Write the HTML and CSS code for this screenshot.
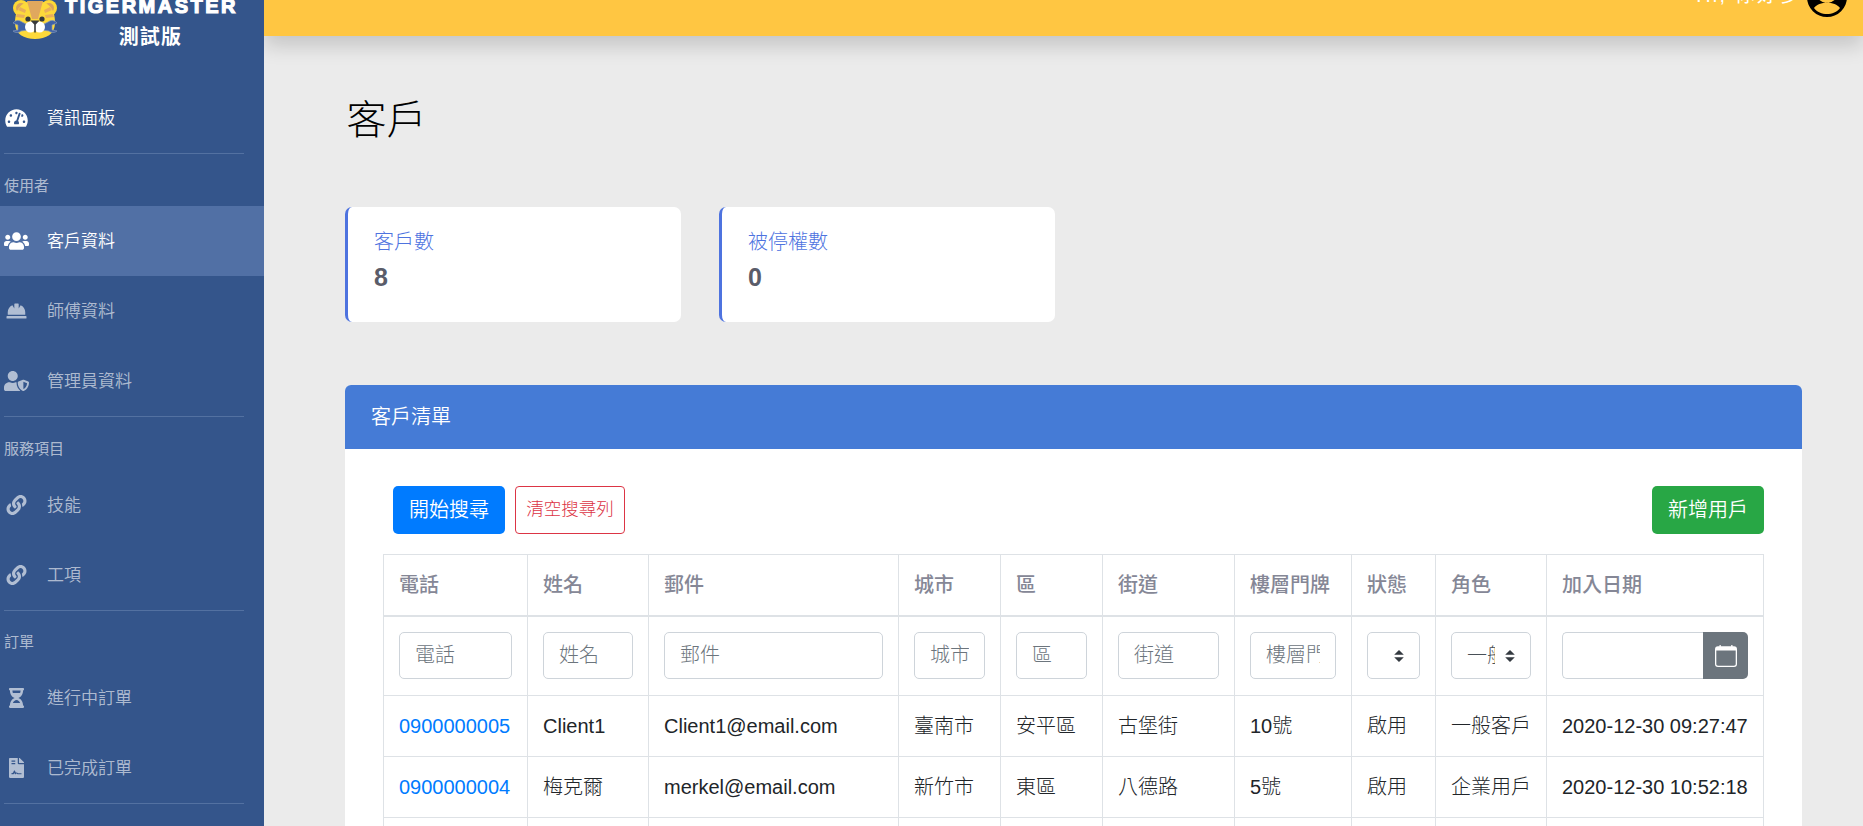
FILE: index.html
```html
<!DOCTYPE html>
<html lang="zh-Hant">
<head>
<meta charset="utf-8">
<title>客戶</title>
<link rel="stylesheet" href="styles.css">
</head>
<body>
<div class="app">
  <aside class="sidebar">
    <a class="brand">
      <svg class="brand-logo" viewBox="0 0 46 42">
        <circle cx="9" cy="9" r="8" fill="#fdd835"/><circle cx="37" cy="9" r="8" fill="#fdd835"/>
        <circle cx="9" cy="9" r="5" fill="#d9a35c"/><circle cx="37" cy="9" r="5" fill="#d9a35c"/>
        <path d="M3 24C3 8 11 2 23 2s20 6 20 22c0 11-9 16-20 16S3 35 3 24z" fill="#fdd93b"/>
        <path d="M15 2h16l-5 18h-6z" fill="#e0a85e"/>
        <path d="M5 15l8 1-1 3-8-1zM41 15l-8 1 1 3 8-1zM8 8l6 3-1 3-7-3zM38 8l-6 3 1 3 7-3z" fill="#e8ae5c"/>
        <circle cx="16" cy="20" r="2.600" fill="#373a3c"/><circle cx="30" cy="20" r="2.600" fill="#373a3c"/>
        <path d="M1 24a6 6 0 0 1 9-1l6 3v5l-7 1a6 6 0 0 1-8 0l5-1v-5zM45 24a6 6 0 0 0-9-1l-6 3v5l7 1a6 6 0 0 0 8 0l-5-1v-5z" fill="#3f62a8" stroke="#8296b8" stroke-width=".7"/>
        <circle cx="18.500" cy="28" r="5.500" fill="#fff"/><circle cx="27.500" cy="28" r="5.500" fill="#fff"/>
        <path d="M18.500 21.500h9l-3.700 4v8h-1.600v-8z" fill="#373a3c"/>
      </svg>
      <span class="brand-text">TIGERMASTER<br><span class="brand-sub">測試版</span></span>
    </a>
    <nav class="nav">
      <a class="item bright"><svg viewBox="0 0 576 512"><path d="M288 32C128.940 32 0 160.940 0 320c0 52.800 14.250 102.260 39.060 144.800 5.610 9.620 16.300 15.200 27.440 15.200h443c11.140 0 21.830-5.580 27.440-15.200C561.750 422.260 576 372.800 576 320c0-159.060-128.940-288-288-288zm0 64c14.710 0 26.580 10.130 30.320 23.650-1.110 2.260-2.640 4.230-3.450 6.670l-9.220 27.670c-5.130 3.490-10.970 6.010-17.640 6.010-17.670 0-32-14.330-32-32S270.330 96 288 96zM96 384c-17.670 0-32-14.330-32-32s14.330-32 32-32 32 14.330 32 32-14.330 32-32 32zm48-160c-17.670 0-32-14.330-32-32s14.330-32 32-32 32 14.330 32 32-14.330 32-32 32zm246.770-72.410l-61.330 184C343.130 347.330 352 364.540 352 384c0 11.720-3.380 22.550-8.880 32H232.880c-5.500-9.450-8.880-20.280-8.880-32 0-33.940 26.500-61.430 59.900-63.590l61.340-184.010c4.170-12.560 17.730-19.450 30.360-15.170 12.570 4.190 19.350 17.790 15.170 30.360zm14.660 57.200l15.520-46.550c3.470-1.290 7.130-2.230 11.050-2.230 17.670 0 32 14.330 32 32s-14.330 32-32 32c-11.380-.01-20.890-6.280-26.570-15.220zM480 384c-17.670 0-32-14.330-32-32s14.330-32 32-32 32 14.330 32 32-14.330 32-32 32z"/></svg><span>資訊面板</span></a>
      <hr>
      <div class="heading">使用者</div>
      <a class="item active"><svg viewBox="0 0 640 512"><path d="M96 224c35.300 0 64-28.700 64-64s-28.700-64-64-64-64 28.700-64 64 28.700 64 64 64zm448 0c35.300 0 64-28.700 64-64s-28.700-64-64-64-64 28.700-64 64 28.700 64 64 64zm32 32h-64c-17.600 0-33.500 7.100-45.100 18.600 40.300 22.100 68.900 62 75.100 109.400h66c17.700 0 32-14.300 32-32v-32c0-35.300-28.700-64-64-64zm-256 0c61.900 0 112-50.100 112-112S381.900 32 320 32 208 82.100 208 144s50.100 112 112 112zm76.800 32h-8.300c-20.800 10-43.900 16-68.500 16s-47.600-6-68.500-16h-8.300C179.600 288 128 339.600 128 403.200V432c0 26.500 21.500 48 48 48h288c26.500 0 48-21.500 48-48v-28.800c0-63.600-51.600-115.200-115.200-115.200zm-223.700-13.400C161.500 263.100 145.600 256 128 256H64c-35.300 0-64 28.700-64 64v32c0 17.700 14.300 32 32 32h65.900c6.300-47.400 34.900-87.300 75.200-109.400z"/></svg><span>客戶資料</span></a>
      <a class="item"><svg viewBox="0 0 512 512"><path d="M480 288c0-80.250-49.280-148.920-119.190-177.620L312 192V80a16 16 0 0 0-16-16h-80a16 16 0 0 0-16 16v112l-48.810-81.620C81.280 139.080 32 207.750 32 288v64h448zm16 96H16a16 16 0 0 0-16 16v32a16 16 0 0 0 16 16h480a16 16 0 0 0 16-16v-32a16 16 0 0 0-16-16z"/></svg><span>師傅資料</span></a>
      <a class="item"><svg viewBox="0 0 640 512"><path d="M622.300 271.100l-115.200-45c-4.100-1.600-12.600-3.700-22.200 0l-115.200 45c-10.700 4.200-17.700 14-17.700 24.900 0 111.600 68.700 188.800 132.900 213.900 9.600 3.700 18 1.600 22.200 0C558.400 489.900 640 420.500 640 296c0-10.900-7-20.700-17.700-24.900zM496 462.400V273.300l95.500 37.300c-5.600 87.100-60.900 135.400-95.500 151.800zM224 256c70.700 0 128-57.300 128-128S294.700 0 224 0 96 57.300 96 128s57.300 128 128 128zm96 40c0-2.500.8-4.800 1.100-7.200-2.500-.1-4.900-.8-7.500-.8h-16.700c-22.200 10.200-46.900 16-72.900 16s-50.600-5.800-72.900-16h-16.700C60.200 288 0 348.200 0 422.400V464c0 26.500 21.500 48 48 48h352c6.800 0 13.300-1.500 19.200-4-54-42.900-99.200-116.700-99.200-212z"/></svg><span>管理員資料</span></a>
      <hr>
      <div class="heading tall">服務項目</div>
      <a class="item"><svg viewBox="0 0 512 512"><path id="link" d="M326.612 185.391c59.747 59.809 58.927 155.698.36 214.590-.11.12-.24.25-.36.37l-67.200 67.200c-59.270 59.270-155.699 59.262-214.960 0-59.270-59.260-59.270-155.700 0-214.960l37.106-37.106c9.840-9.840 26.786-3.300 27.294 10.606.648 17.722 3.826 35.527 9.690 52.721 1.986 5.822.567 12.262-3.783 16.612l-13.087 13.087c-28.026 28.026-28.905 73.660-1.155 101.960 28.024 28.579 74.086 28.749 102.325.51l67.200-67.190c28.191-28.191 28.073-73.757 0-101.830-3.701-3.694-7.429-6.564-10.341-8.569a16.037 16.037 0 0 1-6.947-12.606c-.396-10.567 3.348-21.456 11.698-29.806l21.054-21.055c5.521-5.521 14.182-6.199 20.584-1.731a152.482 152.482 0 0 1 20.522 17.197zM467.547 44.449c-59.261-59.262-155.690-59.270-214.960 0l-67.200 67.200c-.12.12-.25.25-.36.37-58.566 58.892-59.387 154.781.36 214.590a152.454 152.454 0 0 0 20.521 17.196c6.402 4.468 15.064 3.789 20.584-1.731l21.054-21.055c8.350-8.350 12.094-19.239 11.698-29.806a16.037 16.037 0 0 0-6.947-12.606c-2.912-2.005-6.640-4.875-10.341-8.569-28.073-28.073-28.191-73.639 0-101.830l67.200-67.190c28.239-28.239 74.300-28.069 102.325.51 27.750 28.300 26.872 73.934-1.155 101.960l-13.087 13.087c-4.350 4.350-5.769 10.790-3.783 16.612 5.864 17.194 9.042 34.999 9.690 52.721.509 13.906 17.454 20.446 27.294 10.606l37.106-37.106c59.271-59.259 59.271-155.699.001-214.959z"/></svg><span>技能</span></a>
      <a class="item"><svg viewBox="0 0 512 512"><use href="#link"/></svg><span>工項</span></a>
      <hr>
      <div class="heading last">訂單</div>
      <a class="item"><svg viewBox="0 0 384 512"><path d="M360 0H24C10.745 0 0 10.745 0 24v16c0 13.255 10.745 24 24 24 0 90.965 51.016 167.734 120.842 192C75.016 280.266 24 357.035 24 448c-13.255 0-24 10.745-24 24v16c0 13.255 10.745 24 24 24h336c13.255 0 24-10.745 24-24v-16c0-13.255-10.745-24-24-24 0-90.965-51.016-167.734-120.842-192C308.984 231.734 360 154.965 360 64c13.255 0 24-10.745 24-24V24c0-13.255-10.745-24-24-24zm-75.078 384H99.080c17.059-46.797 52.096-80 92.920-80 40.821 0 75.862 33.196 92.922 80zm.019-256H99.078C91.988 108.548 88 86.748 88 64h208c0 22.805-3.987 44.587-11.059 64z"/></svg><span>進行中訂單</span></a>
      <a class="item"><svg viewBox="0 0 384 512"><path fill-rule="evenodd" d="M224 136V0H24C10.700 0 0 10.700 0 24v464c0 13.300 10.700 24 24 24h336c13.300 0 24-10.700 24-24V160H248c-13.200 0-24-10.800-24-24zM64 64h96v32H64zM64 128h96v32H64zM64 384h24c8 0 14-5 17-12l21-45c5-11 22-11 26 0l20 47c22-11 44-2 55 10 5 5 9 5 15 5h78v27h-82c-16 0-26-6-34-14-6-6-14-5-20 0l-14 12c-7 6-18 4-21-5l-10-31-9 22c-8 17-24 16-42 16H64zM377 105L279 7c-5-5-11-7-17-7h-6v128h128v-6c0-6-3-12-7-17z"/></svg><span>已完成訂單</span></a>
      <hr>
    </nav>
  </aside>
  <div class="content">
    <header class="topbar">
      <span class="user">Hi, 你好多</span>
      <svg class="avatar" viewBox="0 0 40 40"><path fill-rule="evenodd" d="M20 0a20 20 0 1 0 0 40 20 20 0 0 0 0-40zM20 4a7.500 7.500 0 0 1 0 22 11 11 0 0 1 0-22zM7 31c5-7 21-7 26 0-6 8-20 8-26 0z"/></svg>
    </header>
    <main class="main">
      <h1>客戶</h1>
      <div class="stats">
        <section class="stat"><div class="stat-label">客戶數</div><div class="stat-value">8</div></section>
        <section class="stat"><div class="stat-label">被停權數</div><div class="stat-value">0</div></section>
      </div>
      <section class="panel">
        <div class="panel-head">客戶清單</div>
        <div class="panel-body">
          <div class="toolbar">
            <button class="btn primary">開始搜尋</button>
            <button class="btn danger">清空搜尋列</button>
            <button class="btn success">新增用戶</button>
          </div>
          <table class="table">
            <colgroup><col class="c1"><col class="c2"><col class="c3"><col class="c4"><col class="c5"><col class="c6"><col class="c7"><col class="c8"><col class="c9"><col class="c10"></colgroup>
            <thead><tr><th>電話</th><th>姓名</th><th>郵件</th><th>城市</th><th>區</th><th>街道</th><th>樓層門牌</th><th>狀態</th><th>角色</th><th>加入日期</th></tr></thead>
            <tbody>
              <tr class="filters">
                <td><input class="field" placeholder="電話"></td>
                <td><input class="field" placeholder="姓名"></td>
                <td><input class="field" placeholder="郵件"></td>
                <td><input class="field" placeholder="城市"></td>
                <td><input class="field" placeholder="區"></td>
                <td><input class="field" placeholder="街道"></td>
                <td><input class="field" placeholder="樓層門牌"></td>
                <td><div class="field select"><span></span><svg viewBox="0 0 4 5"><path d="M2 0L0 2h4zm0 5L0 3h4z"/></svg></div></td>
                <td><div class="field select"><span>一般客戶</span><svg viewBox="0 0 4 5"><path d="M2 0L0 2h4zm0 5L0 3h4z"/></svg></div></td>
                <td><div class="date"><input class="field"><button class="cal"><svg viewBox="0 0 22 22"><path fill-rule="evenodd" d="M4.500 0h1.300v1.300h10.400V0h1.300v1.300H19a3 3 0 0 1 3 3V19a3 3 0 0 1-3 3H3a3 3 0 0 1-3-3V4.300a3 3 0 0 1 3-3h1.500zM1.300 5.500V19c0 1 .7 1.700 1.700 1.700h16c1 0 1.700-.7 1.700-1.700V5.500z"/></svg></button></div></td>
              </tr>
              <tr><td><a>0900000005</a></td><td>Client1</td><td>Client1@email.com</td><td>臺南市</td><td>安平區</td><td>古堡街</td><td>10號</td><td>啟用</td><td>一般客戶</td><td>2020-12-30 09:27:47</td></tr>
              <tr><td><a>0900000004</a></td><td>梅克爾</td><td>merkel@email.com</td><td>新竹市</td><td>東區</td><td>八德路</td><td>5號</td><td>啟用</td><td>企業用戶</td><td>2020-12-30 10:52:18</td></tr>
              <tr><td></td><td></td><td></td><td></td><td></td><td></td><td></td><td></td><td></td><td></td></tr>
            </tbody>
          </table>
        </div>
      </section>
    </main>
  </div>
</div>
</body>
</html>
```
FILE: styles.css
```css
* { box-sizing: border-box; }
body {
  margin: 0;
  height: 826px;
  overflow: hidden;
  background: #ebebeb;
  color: #212529;
  font: 300 20px/30px "Liberation Sans", "Noto Sans CJK TC", sans-serif;
}
.app { display: flex; height: 826px; overflow: hidden; }
.sidebar { position: relative; z-index: 1; width: 264px; flex: none; background: #34558b; }
.brand {
  display: flex;
  height: 83px;
  padding-left: 12px;
  color: #fff;
}
.brand-logo { width: 46px; height: 42px; margin-top: -1px; flex: none; }
.brand-text {
  width: 187px;
  margin: -9px 0 0;
  text-align: center;
  font-weight: 800;
  line-height: 30px;
  letter-spacing: 2.5px;
  -webkit-text-stroke: 1.2px #fff;
}
.brand-sub { position: relative; top: 1px; left: -1px; -webkit-text-stroke: 0; letter-spacing: 1.25px; font-weight: 700; }
.item {
  display: flex;
  align-items: center;
  height: 70px;
  padding-left: 4px;
  gap: 18px;
  font-size: 17px;
  font-weight: 350;
  color: rgba(255,255,255,.62);
}
.item span { padding-top: 2px; }
.item svg { width: 25px; height: 20px; flex: none; fill: currentColor; }
.bright, .active { color: #fff; }
.active { background: #5170a5; }
.nav hr { width: 240px; height: 1px; margin: 0 0 0 4px; border: 0; background: #5371a1; }
.heading { height: 52px; padding: 17px 0 0 4px; font-size: 15px; font-weight: 400; line-height: 30px; color: rgba(255,255,255,.62); }
.tall { height: 53px; }
.last { padding-top: 16px; }
.content { flex: 1; min-width: 0; }
.topbar {
  display: flex;
  justify-content: flex-end;
  height: 36px;
  padding-right: 16px;
  background: #ffc642;
  box-shadow: 0 10px 20px rgba(0,0,0,.16);
}
.user { margin: -20px 6px 0 0; color: #fff; font-weight: 400; letter-spacing: 2.1px; }
.avatar { width: 40px; height: 40px; margin-top: -23px; flex: none; }
.main { padding: 54px 61px 0 81px; }
h1 { margin: 0 0 57px 1.500px; font-size: 40px; font-weight: 300; line-height: 60px; color: #000; }
.stats { display: flex; gap: 38px; }
.stat {
  width: 336px;
  height: 115px;
  padding: 20px 26px;
  border-left: 3px solid #4e73df;
  border-radius: 7px;
  background: #fff;
}
.stat-label { line-height: 30px; color: #4e73df; }
.stat-value { margin-top: 5px; font-size: 25px; font-weight: 700; line-height: 30px; color: #5a5c69; }
.panel { margin-top: 63px; height: 700px; background: #fff; border-radius: 6px; overflow: hidden; }
.panel-head { height: 64px; padding-left: 26px; line-height: 64px; color: #fff; background: #457bd6; font-weight: 350; }
.panel-body { padding: 37px 38px; }
.toolbar { display: flex; gap: 10px; height: 48px; margin: 0 0 20px 10px; }
.btn {
  width: 112px;
  height: 48px;
  padding: 0;
  border: 0;
  border-radius: 5px;
  color: #fff;
  font: inherit;
  font-weight: 350;
}
.primary { background: #007bff; }
.danger { width: 110px; padding-bottom: 2px; border: 1px solid #dc3545; border-radius: 4px; background: #fff; color: #dc3545; font-size: 17.5px; font-weight: 300; }
.success { margin-left: auto; background: #28a745; }
.table { width: 1381px; table-layout: fixed; border-collapse: collapse; font-weight: 300; }
.c1 { width: 144px; } .c2 { width: 121px; } .c3 { width: 250px; } .c4 { width: 102px; } .c5 { width: 102px; }
.c6 { width: 132px; } .c7 { width: 117px; } .c8 { width: 84px; } .c9 { width: 111px; } .c10 { width: 217px; }
th, td { padding: 0 15px; border: 1px solid #dee2e6; text-align: left; white-space: nowrap; height: 61px; }
th { border-bottom-width: 2px; font-weight: 500; color: #858796; }
.filters td { height: 80px; }
td a { color: #007bff; }
.field {
  display: block;
  width: 100%;
  height: 47px;
  padding: 0 15px;
  border: 1px solid #ced4da;
  border-radius: 5px;
  background: #fff;
  color: #495057;
  font: inherit;
}
.field::placeholder { color: #6c757d; opacity: 1; }
.select { display: flex; align-items: center; padding: 0 15px; }
.select span { flex: 1; overflow: hidden; margin-right: 10px; }
.select svg { width: 10px; height: 12px; flex: none; fill: #343a40; }
.date { display: flex; }
.date .field { border-right: 0; border-radius: 5px 0 0 5px; width: 141px; }
.cal { display: flex; align-items: center; justify-content: center; width: 45px; height: 47px; padding: 0; border: 0; border-radius: 0 5px 5px 0; background: #6c757d; }
.cal svg { width: 22px; height: 22px; fill: #fff; }
```
